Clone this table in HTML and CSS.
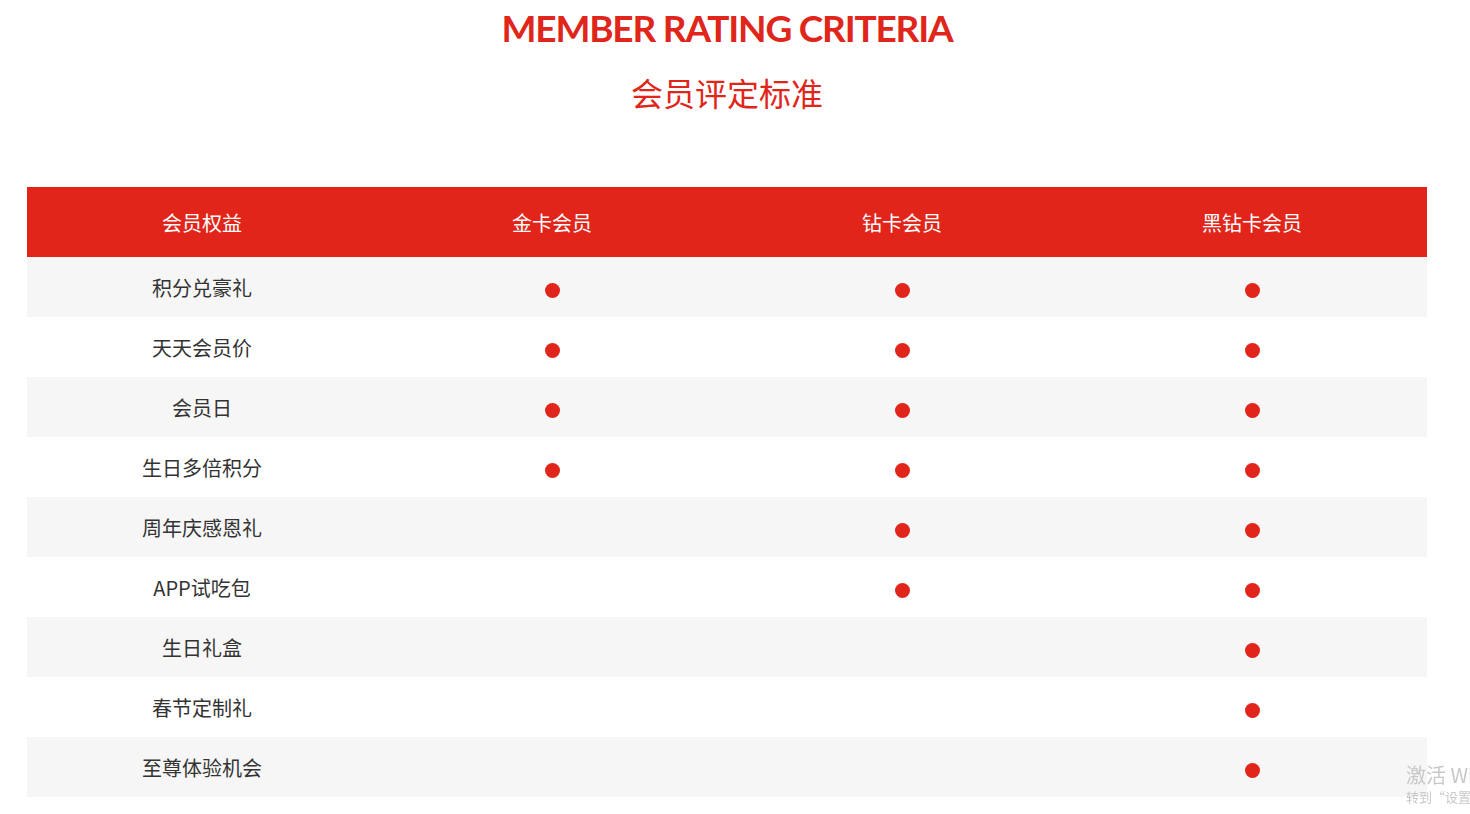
FILE: index.html
```html
<!DOCTYPE html>
<html lang="zh-CN">
<head>
<meta charset="utf-8">
<title>会员评定标准</title>
<link rel="stylesheet" href="styles.css">
</head>
<body>
<div class="page">
  <h1 class="title">MEMBER RATING CRITERIA</h1>
  <h2 class="subtitle">会员评定标准</h2>
  <table class="rating">
    <thead>
      <tr><th>会员权益</th><th>金卡会员</th><th>钻卡会员</th><th>黑钻卡会员</th></tr>
    </thead>
    <tbody>
      <tr><td>积分兑豪礼</td><td><span class="dot"></span></td><td><span class="dot"></span></td><td><span class="dot"></span></td></tr>
      <tr><td>天天会员价</td><td><span class="dot"></span></td><td><span class="dot"></span></td><td><span class="dot"></span></td></tr>
      <tr><td>会员日</td><td><span class="dot"></span></td><td><span class="dot"></span></td><td><span class="dot"></span></td></tr>
      <tr><td>生日多倍积分</td><td><span class="dot"></span></td><td><span class="dot"></span></td><td><span class="dot"></span></td></tr>
      <tr><td>周年庆感恩礼</td><td></td><td><span class="dot"></span></td><td><span class="dot"></span></td></tr>
      <tr><td>APP试吃包</td><td></td><td><span class="dot"></span></td><td><span class="dot"></span></td></tr>
      <tr><td>生日礼盒</td><td></td><td></td><td><span class="dot"></span></td></tr>
      <tr><td>春节定制礼</td><td></td><td></td><td><span class="dot"></span></td></tr>
      <tr><td>至尊体验机会</td><td></td><td></td><td><span class="dot"></span></td></tr>
    </tbody>
  </table>
</div>
<div class="watermark">
  <div class="wm-big">激活 Windows</div>
  <div class="wm-small">转到“设置”以激活 Windows。</div>
</div>
</body>
</html>
```

FILE: styles.css
```css
html, body {
  margin: 0;
  padding: 0;
  background: #ffffff;
  overflow: hidden;
}
body {
  font-family: "Noto Sans CJK SC", "Microsoft YaHei", sans-serif;
  color: #333333;
}
.page {
  width: 1400px;
  margin-left: 27px;
  padding-top: 6px;
}
.title {
  margin: 0;
  text-align: center;
  font-family: "Lato", "Liberation Sans", sans-serif;
  font-weight: 700;
  font-size: 37px;
  line-height: 44px;
  color: #e0251b;
  letter-spacing: -1.2px;
}
.subtitle {
  margin: 20px 0 0;
  text-align: center;
  font-weight: 400;
  font-size: 32px;
  line-height: 44px;
  color: #e0251b;
}
.rating {
  margin-top: 73px;
  width: 1400px;
  border-collapse: collapse;
  table-layout: fixed;
}
.rating th {
  height: 70px;
  padding: 0;
  background: #e1251b;
  color: #ffffff;
  font-weight: 400;
  font-size: 20px;
  text-align: center;
  vertical-align: middle;
}
.rating td {
  height: 60px;
  padding: 0;
  font-size: 20px;
  text-align: center;
  vertical-align: middle;
  color: #333333;
}
.rating tbody tr:nth-child(odd) td {
  background: #f6f6f6;
}
.dot {
  display: inline-block;
  width: 15px;
  height: 15px;
  border-radius: 50%;
  background: #e1251b;
  vertical-align: middle;
  margin-top: 0;
}
.watermark {
  position: fixed;
  left: 1406px;
  top: 762px;
  color: #c8c8c8;
  white-space: nowrap;
}
.wm-big {
  font-size: 20px;
  line-height: 26px;
}
.wm-small {
  font-size: 13px;
  line-height: 18px;
}
```
